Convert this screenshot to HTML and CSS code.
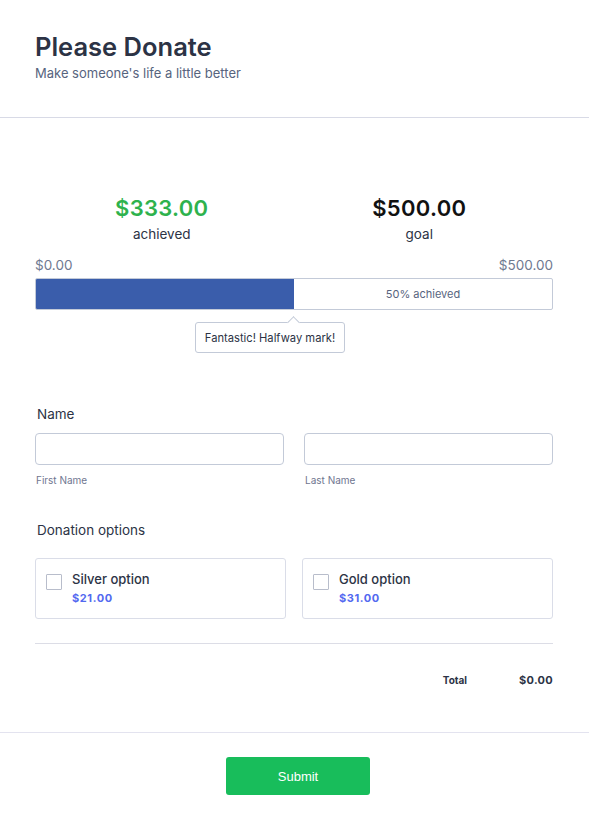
FILE: index.html
```html
<!DOCTYPE html>
<html>
<head>
<meta charset="utf-8">
<link rel="stylesheet" href="styles.css">
</head>
<body>
<header class="header">
  <h1 class="title">Please Donate</h1>
  <p class="subtitle">Make someone's life a little better</p>
</header>
<main class="content">
  <section class="stats">
    <div class="stat">
      <div class="stat-value green">$333.00</div>
      <div class="stat-label">achieved</div>
    </div>
    <div class="stat">
      <div class="stat-value">$500.00</div>
      <div class="stat-label">goal</div>
    </div>
  </section>
  <div class="range">
    <span>$0.00</span>
    <span>$500.00</span>
  </div>
  <div class="bar">
    <div class="bar-fill"></div>
    <div class="bar-rest">50% achieved</div>
  </div>
  <div class="tip-row">
    <div class="tip">Fantastic! Halfway mark!</div>
  </div>

  <section class="field name-field">
    <label class="field-label">Name</label>
    <div class="name-grid">
      <div class="name-col">
        <div class="input"></div>
        <div class="sublabel">First Name</div>
      </div>
      <div class="name-col">
        <div class="input"></div>
        <div class="sublabel">Last Name</div>
      </div>
    </div>
  </section>

  <section class="field options-field">
    <label class="field-label">Donation options</label>
    <div class="options">
      <div class="option">
        <span class="check"></span>
        <div class="option-text">
          <div class="option-name">Silver option</div>
          <div class="option-price">$21.00</div>
        </div>
      </div>
      <div class="option">
        <span class="check"></span>
        <div class="option-text">
          <div class="option-name">Gold option</div>
          <div class="option-price">$31.00</div>
        </div>
      </div>
    </div>
  </section>

  <div class="total-row">
    <span class="total-label">Total</span>
    <span class="total-value">$0.00</span>
  </div>
</main>
<footer class="footer">
  <button class="submit">Submit</button>
</footer>
</body>
</html>
```
FILE: styles.css
```css
* { box-sizing: border-box; }
html, body { margin: 0; padding: 0; background: #fff; }
body {
  font-family: Inter, "Noto Sans", "Liberation Sans", sans-serif;
  color: #2c3345;
  width: 589px;
}
.header {
  padding: 32px 35px 35px;
  border-bottom: 1px solid #d8dae6;
}
.title {
  margin: 0;
  font-size: 25.5px;
  font-weight: 600;
  line-height: 30px;
  color: #2c3345;
}
.subtitle {
  margin: 2px 0 0;
  font-size: 13px;
  line-height: 18px;
  color: #57647e;
}
.content {
  padding: 76px 36px 0 35px;
}
.stats {
  display: grid;
  grid-template-columns: 1fr 1fr;
  margin: 0 5px 0 -2px;
}
.stat { text-align: center; }
.stat-value {
  font-size: 22px;
  font-weight: 600;
  line-height: 28px;
  color: #111;
  letter-spacing: 0.3px;
}
.stat-value.green { color: #2eb24d; }
.stat-label {
  font-size: 13.5px;
  line-height: 18px;
  margin-top: 3px;
  color: #2c3345;
}
.range {
  display: flex;
  justify-content: space-between;
  margin-top: 13px;
  font-size: 13.5px;
  line-height: 18px;
  color: #6f7990;
}
.bar {
  display: flex;
  height: 32px;
  margin-top: 4px;
  border: 1px solid #c3cad8;
  border-radius: 2px;
  overflow: hidden;
}
.bar-fill {
  width: 50%;
  background: #3a5dab;
}
.bar-rest {
  flex: 1;
  display: flex;
  align-items: center;
  justify-content: center;
  font-size: 11px;
  color: #57647e;
}
.tip-row {
  display: flex;
  justify-content: center;
  margin-top: 12px;
  padding-right: 48px;
}
.tip {
  position: relative;
  border: 1px solid #c3cad8;
  border-radius: 3px;
  background: #fff;
  font-size: 11.2px;
  line-height: 14px;
  padding: 8px 9px 7px;
  color: #2c3345;
}
.tip::before {
  content: "";
  position: absolute;
  top: -5px;
  left: 93px;
  width: 8px;
  height: 8px;
  background: #fff;
  border-left: 1px solid #c3cad8;
  border-top: 1px solid #c3cad8;
  transform: rotate(45deg);
}
.field { margin-top: 52px; }
.field-label {
  display: block;
  font-size: 13.5px;
  font-weight: 400;
  line-height: 18px;
  padding-left: 2px;
  color: #2c3345;
}
.name-grid {
  display: grid;
  grid-template-columns: 1fr 1fr;
  gap: 20px;
  margin-top: 10px;
}
.input {
  height: 32px;
  border: 1px solid #c3cad8;
  border-radius: 4px;
}
.sublabel {
  font-size: 10px;
  line-height: 14px;
  margin-top: 8px;
  padding-left: 1px;
  color: #6f7690;
}
.options-field { margin-top: 34px; }
.options {
  display: grid;
  grid-template-columns: 1fr 1fr;
  gap: 16px;
  margin-top: 19px;
}
.option {
  display: flex;
  align-items: flex-start;
  height: 61px;
  border: 1px solid #dadde8;
  border-radius: 3px;
  padding: 12px 10px;
}
.check {
  width: 16px;
  height: 16px;
  border: 1px solid #b8bdcb;
  border-radius: 1px;
  margin-top: 3px;
  flex-shrink: 0;
}
.option-text { margin-left: 10px; }
.option-name {
  font-size: 13px;
  font-weight: 500;
  line-height: 16px;
  color: #2c3345;
}
.option-price {
  margin-top: 4px;
  font-size: 11px;
  font-weight: 700;
  line-height: 14px;
  letter-spacing: 0.6px;
  color: #5269f0;
}
.total-row {
  display: flex;
  justify-content: flex-end;
  gap: 52px;
  margin-top: 24px;
  padding-top: 28px;
  border-top: 1px solid #dcdde6;
  font-weight: 700;
  color: #2c3345;
}
.total-label { font-size: 10px; line-height: 16px; }
.total-value { font-size: 11px; line-height: 16px; letter-spacing: 0.3px; }
.footer {
  margin-top: 44px;
  border-top: 1px solid #e3e3ef;
  padding-top: 24px;
  padding-left: 7px;
  display: flex;
  justify-content: center;
}
.submit {
  width: 144px;
  height: 38px;
  border: 0;
  border-radius: 3px;
  background: #18bd5b;
  color: #fff;
  font-family: "Liberation Sans", Arial, sans-serif;
  font-size: 13px;
  font-weight: 400;
}
```
